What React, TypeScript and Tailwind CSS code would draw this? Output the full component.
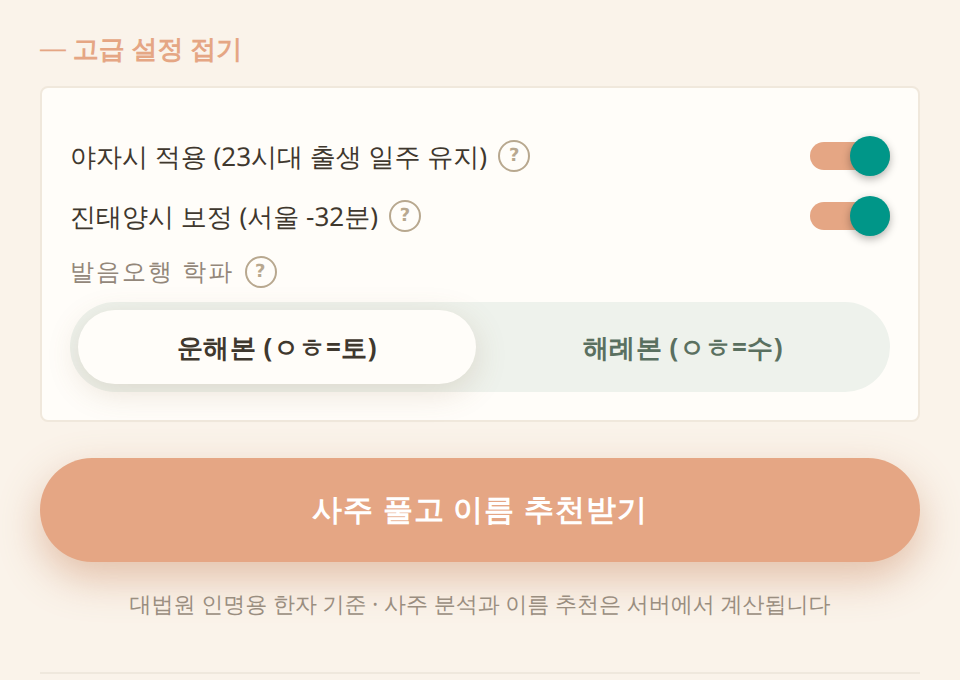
import { useState } from 'react';

const base = '[font-family:"Noto_Sans",sans-serif] [text-rendering:geometricPrecision]';

function HelpMark() {
  return (
    <span className="ml-[11px] flex h-8 w-8 shrink-0 items-center justify-center rounded-full border-2 border-[#b8a88f] [font-family:'DejaVu_Sans',sans-serif] text-[18px] leading-none font-bold text-[#b8a88f]">
      ?
    </span>
  );
}

function Toggle() {
  return (
    <div className="relative h-7 w-20 rounded-full bg-[#e5a684]">
      <div className="absolute top-[-6px] right-0 h-10 w-10 rounded-full bg-[#009688] shadow-[0_3px_8px_rgba(0,0,0,0.3)]" />
    </div>
  );
}

export default function App() {
  const [school, setSchool] = useState('unhae');

  return (
    <div className={`h-[680px] overflow-hidden bg-[#faf3ea] px-10 pt-[30px] ${base}`}>
      <div className="flex h-10 items-center pb-1 text-[26px] font-bold text-[#e5a684]">
        <span className="[font-family:'Liberation_Sans',sans-serif] font-normal">—</span>&nbsp;고급 설정 접기
      </div>

      <div className="mt-4 h-[336px] rounded-lg border-2 border-[#f0e8dc] bg-[#fffdf9] px-[28px] pt-[38px]">
        <div className="flex h-[60px] items-center justify-between">
          <div className="flex items-center text-[26px] text-[#3f382e]">
            야자시 적용 (23시대 출생 일주 유지)
            <HelpMark />
          </div>
          <Toggle />
        </div>
        <div className="flex h-[60px] items-center justify-between">
          <div className="flex items-center text-[26px] text-[#3f382e]">
            진태양시 보정 (서울 -32분)
            <HelpMark />
          </div>
          <Toggle />
        </div>

        <div className="mt-1 flex h-[44px] items-center text-[24px] tracking-[2px] text-[#93877a]">
          발음오행 학파
          <HelpMark />
        </div>

        <div className="mt-2 flex h-[90px] rounded-[45px] bg-[#eef2ec] py-2 pl-2">
          <button
            onClick={() => setSchool('unhae')}
            className={`w-[398px] rounded-[37px] text-[26px] font-bold tracking-[0.5px] ${
              school === 'unhae'
                ? 'bg-[#fffdf9] text-[#3f382e] shadow-[0_8px_32px_rgba(140,100,60,0.18)]'
                : 'text-[#5a7060]'
            }`}
          >
            운해본 (ㅇㅎ=토)
          </button>
          <button
            onClick={() => setSchool('haerye')}
            className={`flex-1 rounded-[37px] text-[26px] font-bold tracking-[0.5px] ${
              school === 'haerye'
                ? 'bg-[#fffdf9] text-[#3f382e] shadow-[0_8px_32px_rgba(140,100,60,0.18)]'
                : 'text-[#5a7060]'
            }`}
          >
            해례본 (ㅇㅎ=수)
          </button>
        </div>
      </div>

      <button className="mt-9 h-[104px] w-full rounded-[52px] bg-[#e5a684] pb-1 text-[30px] font-bold tracking-[1px] text-white shadow-[0_16px_40px_rgba(200,130,90,0.45)]">
        사주 풀고 이름 추천받기
      </button>

      <p className="mt-[26px] text-center text-[22px] text-[#9a8e80]">
        대법원 인명용 한자 기준 · 사주 분석과 이름 추천은 서버에서 계산됩니다
      </p>

      <div className="mt-[51px] h-0.5 bg-[#efe8dd]" />
    </div>
  );
}
